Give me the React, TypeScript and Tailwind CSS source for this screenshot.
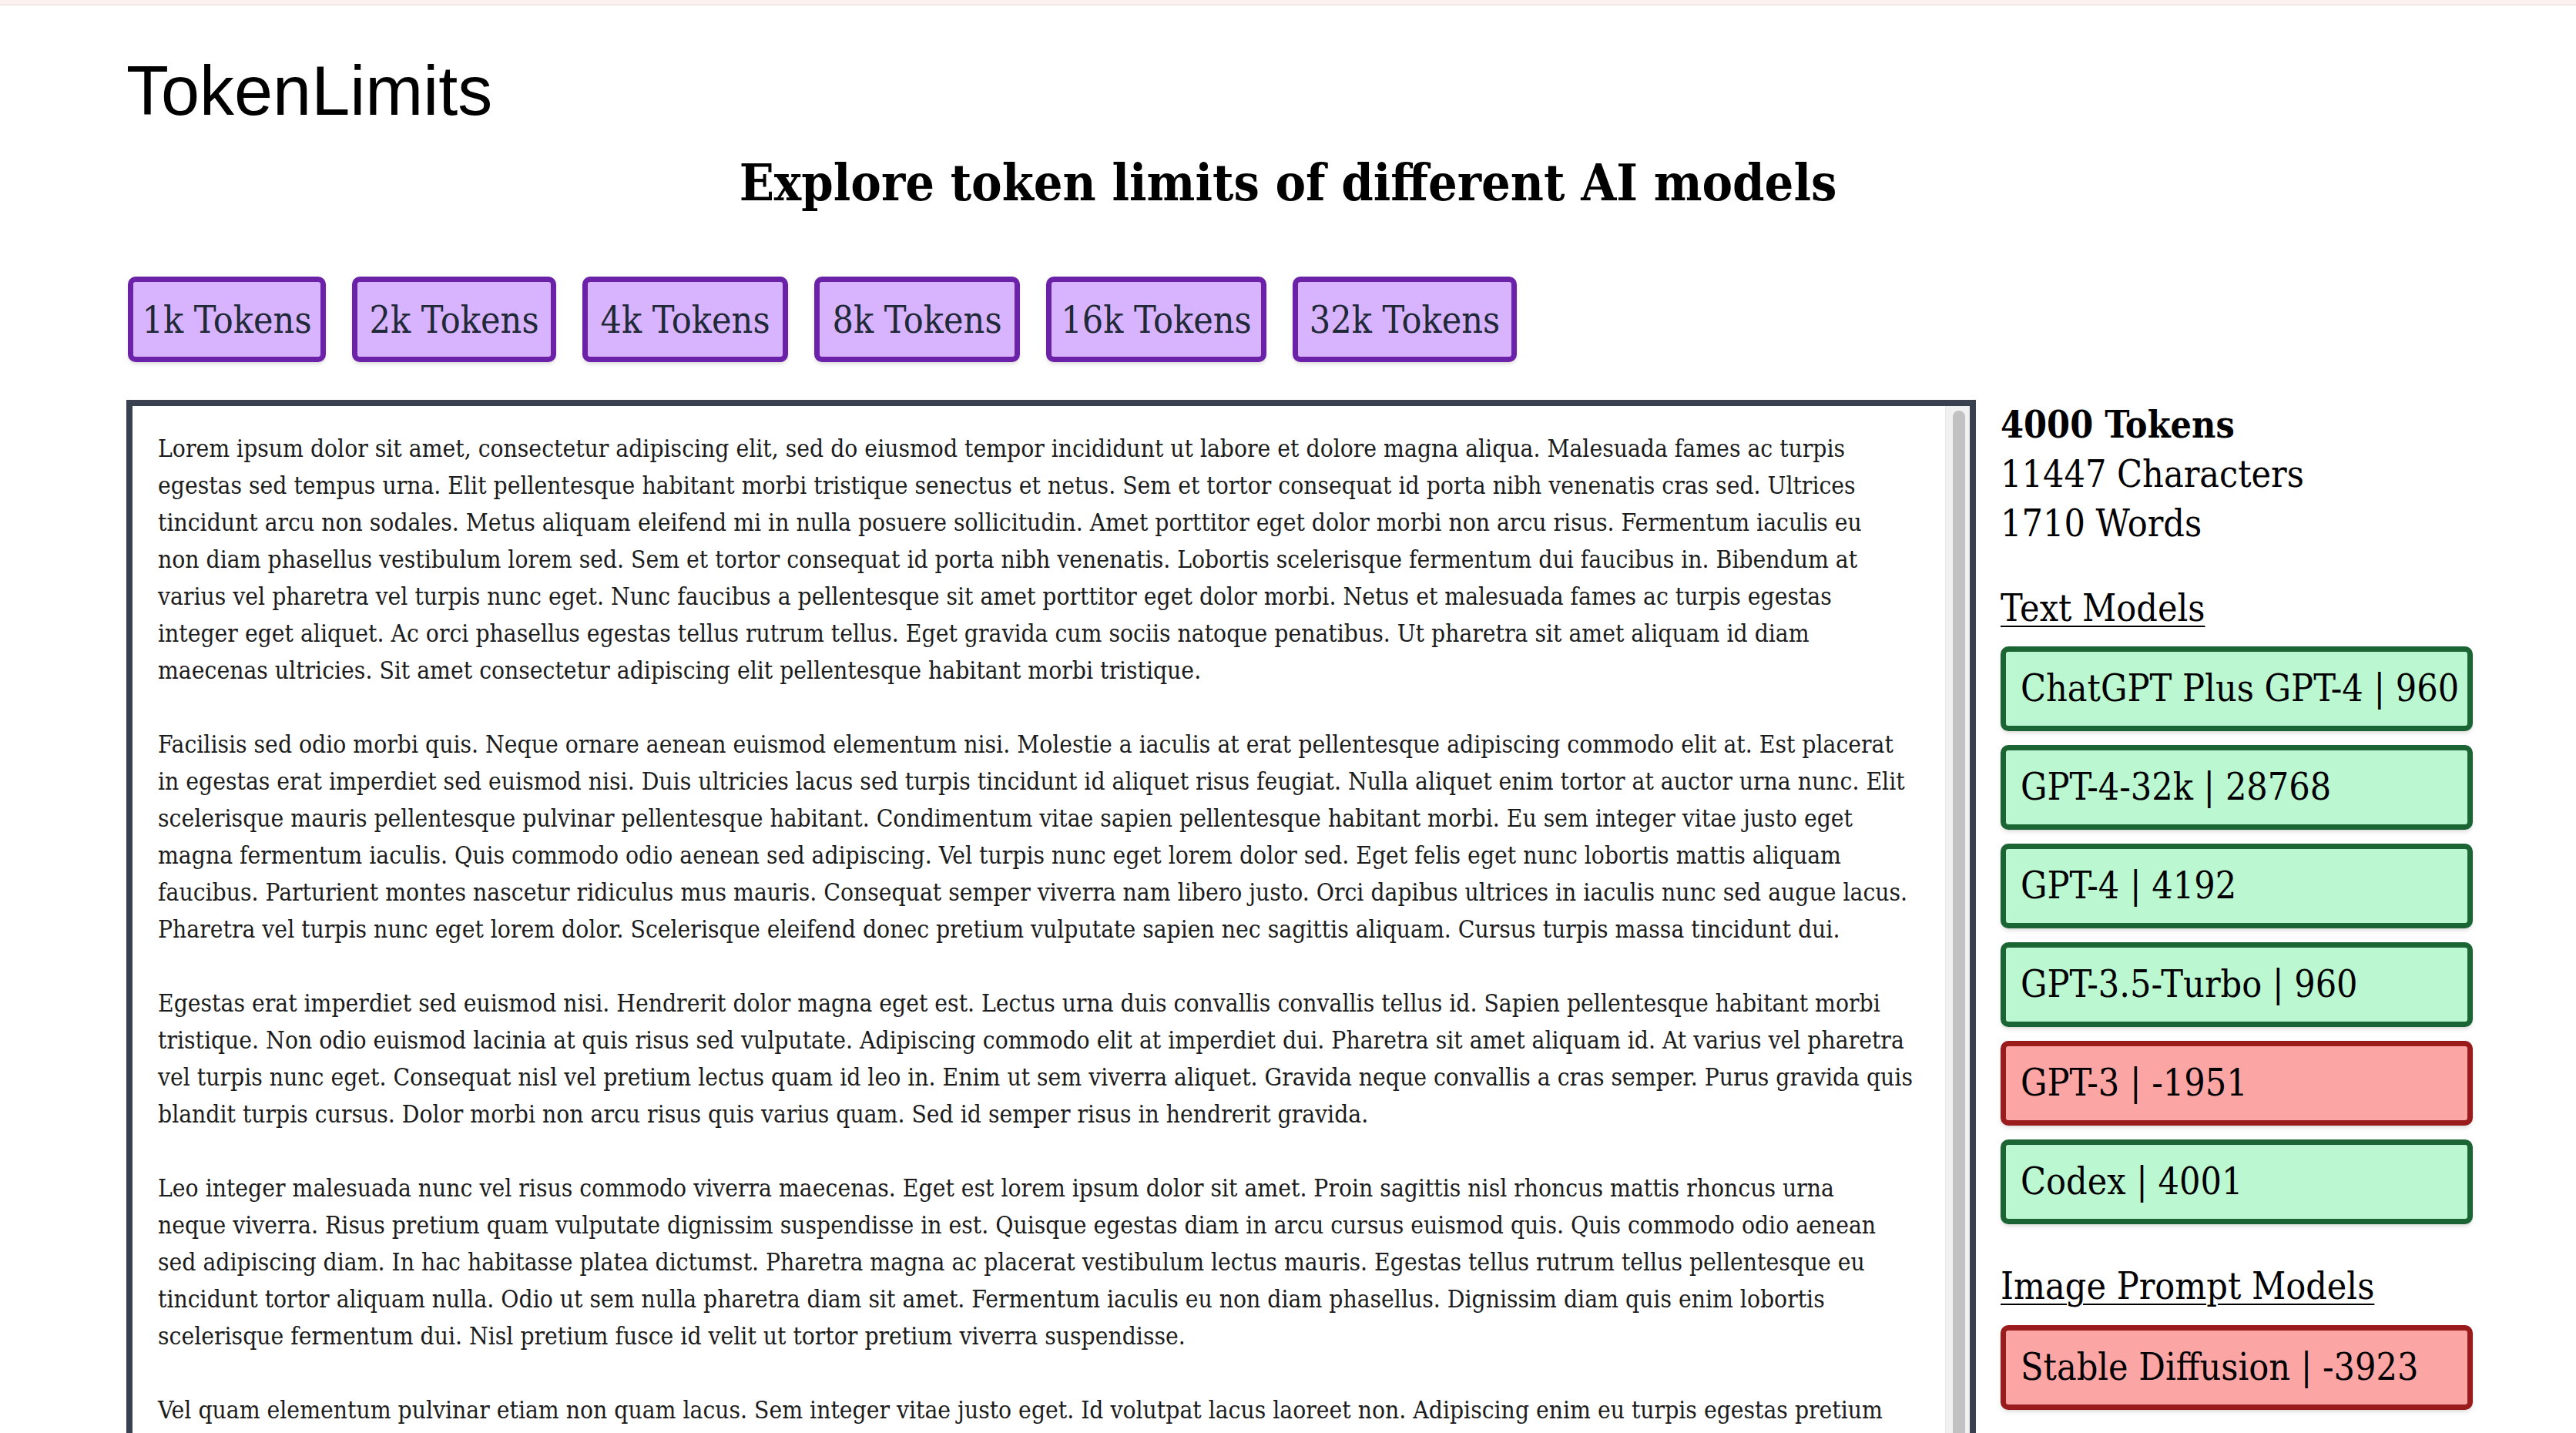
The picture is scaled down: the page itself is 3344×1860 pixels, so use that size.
const serif = "font-['DejaVu_Serif_Condensed','DejaVu_Serif',serif] font-stretch-condensed";

const tokenButtons = [
  { label: "1k Tokens", w: "w-[257px]" },
  { label: "2k Tokens", w: "w-[265px]" },
  { label: "4k Tokens", w: "w-[267px]" },
  { label: "8k Tokens", w: "w-[267px]" },
  { label: "16k Tokens", w: "w-[286px]" },
  { label: "32k Tokens", w: "w-[291px]" },
];

const paragraphs: string[][] = [
  [
    "Lorem ipsum dolor sit amet, consectetur adipiscing elit, sed do eiusmod tempor incididunt ut labore et dolore magna aliqua. Malesuada fames ac turpis",
    "egestas sed tempus urna. Elit pellentesque habitant morbi tristique senectus et netus. Sem et tortor consequat id porta nibh venenatis cras sed. Ultrices",
    "tincidunt arcu non sodales. Metus aliquam eleifend mi in nulla posuere sollicitudin. Amet porttitor eget dolor morbi non arcu risus. Fermentum iaculis eu",
    "non diam phasellus vestibulum lorem sed. Sem et tortor consequat id porta nibh venenatis. Lobortis scelerisque fermentum dui faucibus in. Bibendum at",
    "varius vel pharetra vel turpis nunc eget. Nunc faucibus a pellentesque sit amet porttitor eget dolor morbi. Netus et malesuada fames ac turpis egestas",
    "integer eget aliquet. Ac orci phasellus egestas tellus rutrum tellus. Eget gravida cum sociis natoque penatibus. Ut pharetra sit amet aliquam id diam",
    "maecenas ultricies. Sit amet consectetur adipiscing elit pellentesque habitant morbi tristique.",
  ],
  [
    "Facilisis sed odio morbi quis. Neque ornare aenean euismod elementum nisi. Molestie a iaculis at erat pellentesque adipiscing commodo elit at. Est placerat",
    "in egestas erat imperdiet sed euismod nisi. Duis ultricies lacus sed turpis tincidunt id aliquet risus feugiat. Nulla aliquet enim tortor at auctor urna nunc. Elit",
    "scelerisque mauris pellentesque pulvinar pellentesque habitant. Condimentum vitae sapien pellentesque habitant morbi. Eu sem integer vitae justo eget",
    "magna fermentum iaculis. Quis commodo odio aenean sed adipiscing. Vel turpis nunc eget lorem dolor sed. Eget felis eget nunc lobortis mattis aliquam",
    "faucibus. Parturient montes nascetur ridiculus mus mauris. Consequat semper viverra nam libero justo. Orci dapibus ultrices in iaculis nunc sed augue lacus.",
    "Pharetra vel turpis nunc eget lorem dolor. Scelerisque eleifend donec pretium vulputate sapien nec sagittis aliquam. Cursus turpis massa tincidunt dui.",
  ],
  [
    "Egestas erat imperdiet sed euismod nisi. Hendrerit dolor magna eget est. Lectus urna duis convallis convallis tellus id. Sapien pellentesque habitant morbi",
    "tristique. Non odio euismod lacinia at quis risus sed vulputate. Adipiscing commodo elit at imperdiet dui. Pharetra sit amet aliquam id. At varius vel pharetra",
    "vel turpis nunc eget. Consequat nisl vel pretium lectus quam id leo in. Enim ut sem viverra aliquet. Gravida neque convallis a cras semper. Purus gravida quis",
    "blandit turpis cursus. Dolor morbi non arcu risus quis varius quam. Sed id semper risus in hendrerit gravida.",
  ],
  [
    "Leo integer malesuada nunc vel risus commodo viverra maecenas. Eget est lorem ipsum dolor sit amet. Proin sagittis nisl rhoncus mattis rhoncus urna",
    "neque viverra. Risus pretium quam vulputate dignissim suspendisse in est. Quisque egestas diam in arcu cursus euismod quis. Quis commodo odio aenean",
    "sed adipiscing diam. In hac habitasse platea dictumst. Pharetra magna ac placerat vestibulum lectus mauris. Egestas tellus rutrum tellus pellentesque eu",
    "tincidunt tortor aliquam nulla. Odio ut sem nulla pharetra diam sit amet. Fermentum iaculis eu non diam phasellus. Dignissim diam quis enim lobortis",
    "scelerisque fermentum dui. Nisl pretium fusce id velit ut tortor pretium viverra suspendisse.",
  ],
  [
    "Vel quam elementum pulvinar etiam non quam lacus. Sem integer vitae justo eget. Id volutpat lacus laoreet non. Adipiscing enim eu turpis egestas pretium",
  ],
];

const textModels = [
  { name: "ChatGPT Plus GPT-4", left: 960 },
  { name: "GPT-4-32k", left: 28768 },
  { name: "GPT-4", left: 4192 },
  { name: "GPT-3.5-Turbo", left: 960 },
  { name: "GPT-3", left: -1951 },
  { name: "Codex", left: 4001 },
];

const imageModels = [{ name: "Stable Diffusion", left: -3923 }];

function ModelCard({ name, left }: { name: string; left: number }) {
  const ok = left >= 0;
  return (
    <div
      className={
        ok
          ? "h-[110px] rounded-[10px] border-[7px] border-[#1b6535] bg-[#bbf7d0] px-[19px] pt-[15px] pb-[17px] leading-[64px] text-black shadow-md whitespace-nowrap"
          : "h-[110px] rounded-[10px] border-[7px] border-[#991b1b] bg-[#fca5a5] px-[19px] pt-[15px] pb-[17px] leading-[64px] text-black shadow-md whitespace-nowrap"
      }
    >
      {name} | {left}
    </div>
  );
}

export default function App() {
  return (
    <div className="h-[1860px] w-full overflow-hidden bg-white text-black">
      <div className="h-[7px] border-b border-[#dcdcdc] bg-[#fdf2f0]" />
      <div className="px-[164px]">
        <h1 className="mt-[61px] font-['Liberation_Sans',Arial,sans-serif] text-[90px] leading-[100px] font-normal">
          TokenLimits
        </h1>
        <h2 className={`${serif} mt-[29px] text-center text-[66px] leading-[80px] font-bold`}>
          Explore token limits of different AI models
        </h2>

        <div className="mt-[82px] ml-[2px] flex gap-[34px]">
          {tokenButtons.map((b) => (
            <button
              key={b.label}
              className={`${serif} ${b.w} h-[111px] rounded-[10px] border-[7px] border-[#6b21a8] bg-[#d8b4fe] text-center text-[48px] leading-[64px] text-[#1f2937] shadow-md whitespace-nowrap`}
            >
              {b.label}
            </button>
          ))}
        </div>

        <div className="mt-[49px] flex items-start gap-[32px]">
          <div className="flex h-[1400px] w-[2401px] shrink-0 border-[8px] border-[#394151] bg-white">
            <div className={`${serif} flex-1 pl-[33px] pt-[31px] text-[31.5px] leading-[48px] text-[#1c1c1c]`}>
              {paragraphs.map((p, i) => (
                <div key={i} className="mb-[48px]">
                  {p.map((l, j) => (
                    <div key={j} className="whitespace-nowrap">
                      {l}
                    </div>
                  ))}
                </div>
              ))}
            </div>
            <div className="w-[32px] shrink-0 border-l border-[#e6e6e6] bg-[#f1f1f1] pt-[6px]">
              <div className="ml-[9px] h-[1500px] w-[16px] rounded-full bg-[#c1c1c1]" />
            </div>
          </div>

          <div className={`${serif} w-[613px] shrink-0 text-[48px] leading-[64px]`}>
            <div className="font-bold">4000 Tokens</div>
            <div>11447 Characters</div>
            <div>1710 Words</div>

            <h3 className="mt-[46px] underline decoration-[2px] underline-offset-[6px]">Text Models</h3>
            <div className="mt-[18px] flex flex-col gap-[18px]">
              {textModels.map((m) => (
                <ModelCard key={m.name} {...m} />
              ))}
            </div>

            <h3 className="mt-[48px] underline decoration-[2px] underline-offset-[6px]">Image Prompt Models</h3>
            <div className="mt-[19px] flex flex-col gap-[18px]">
              {imageModels.map((m) => (
                <ModelCard key={m.name} {...m} />
              ))}
            </div>
          </div>
        </div>
      </div>
    </div>
  );
}
